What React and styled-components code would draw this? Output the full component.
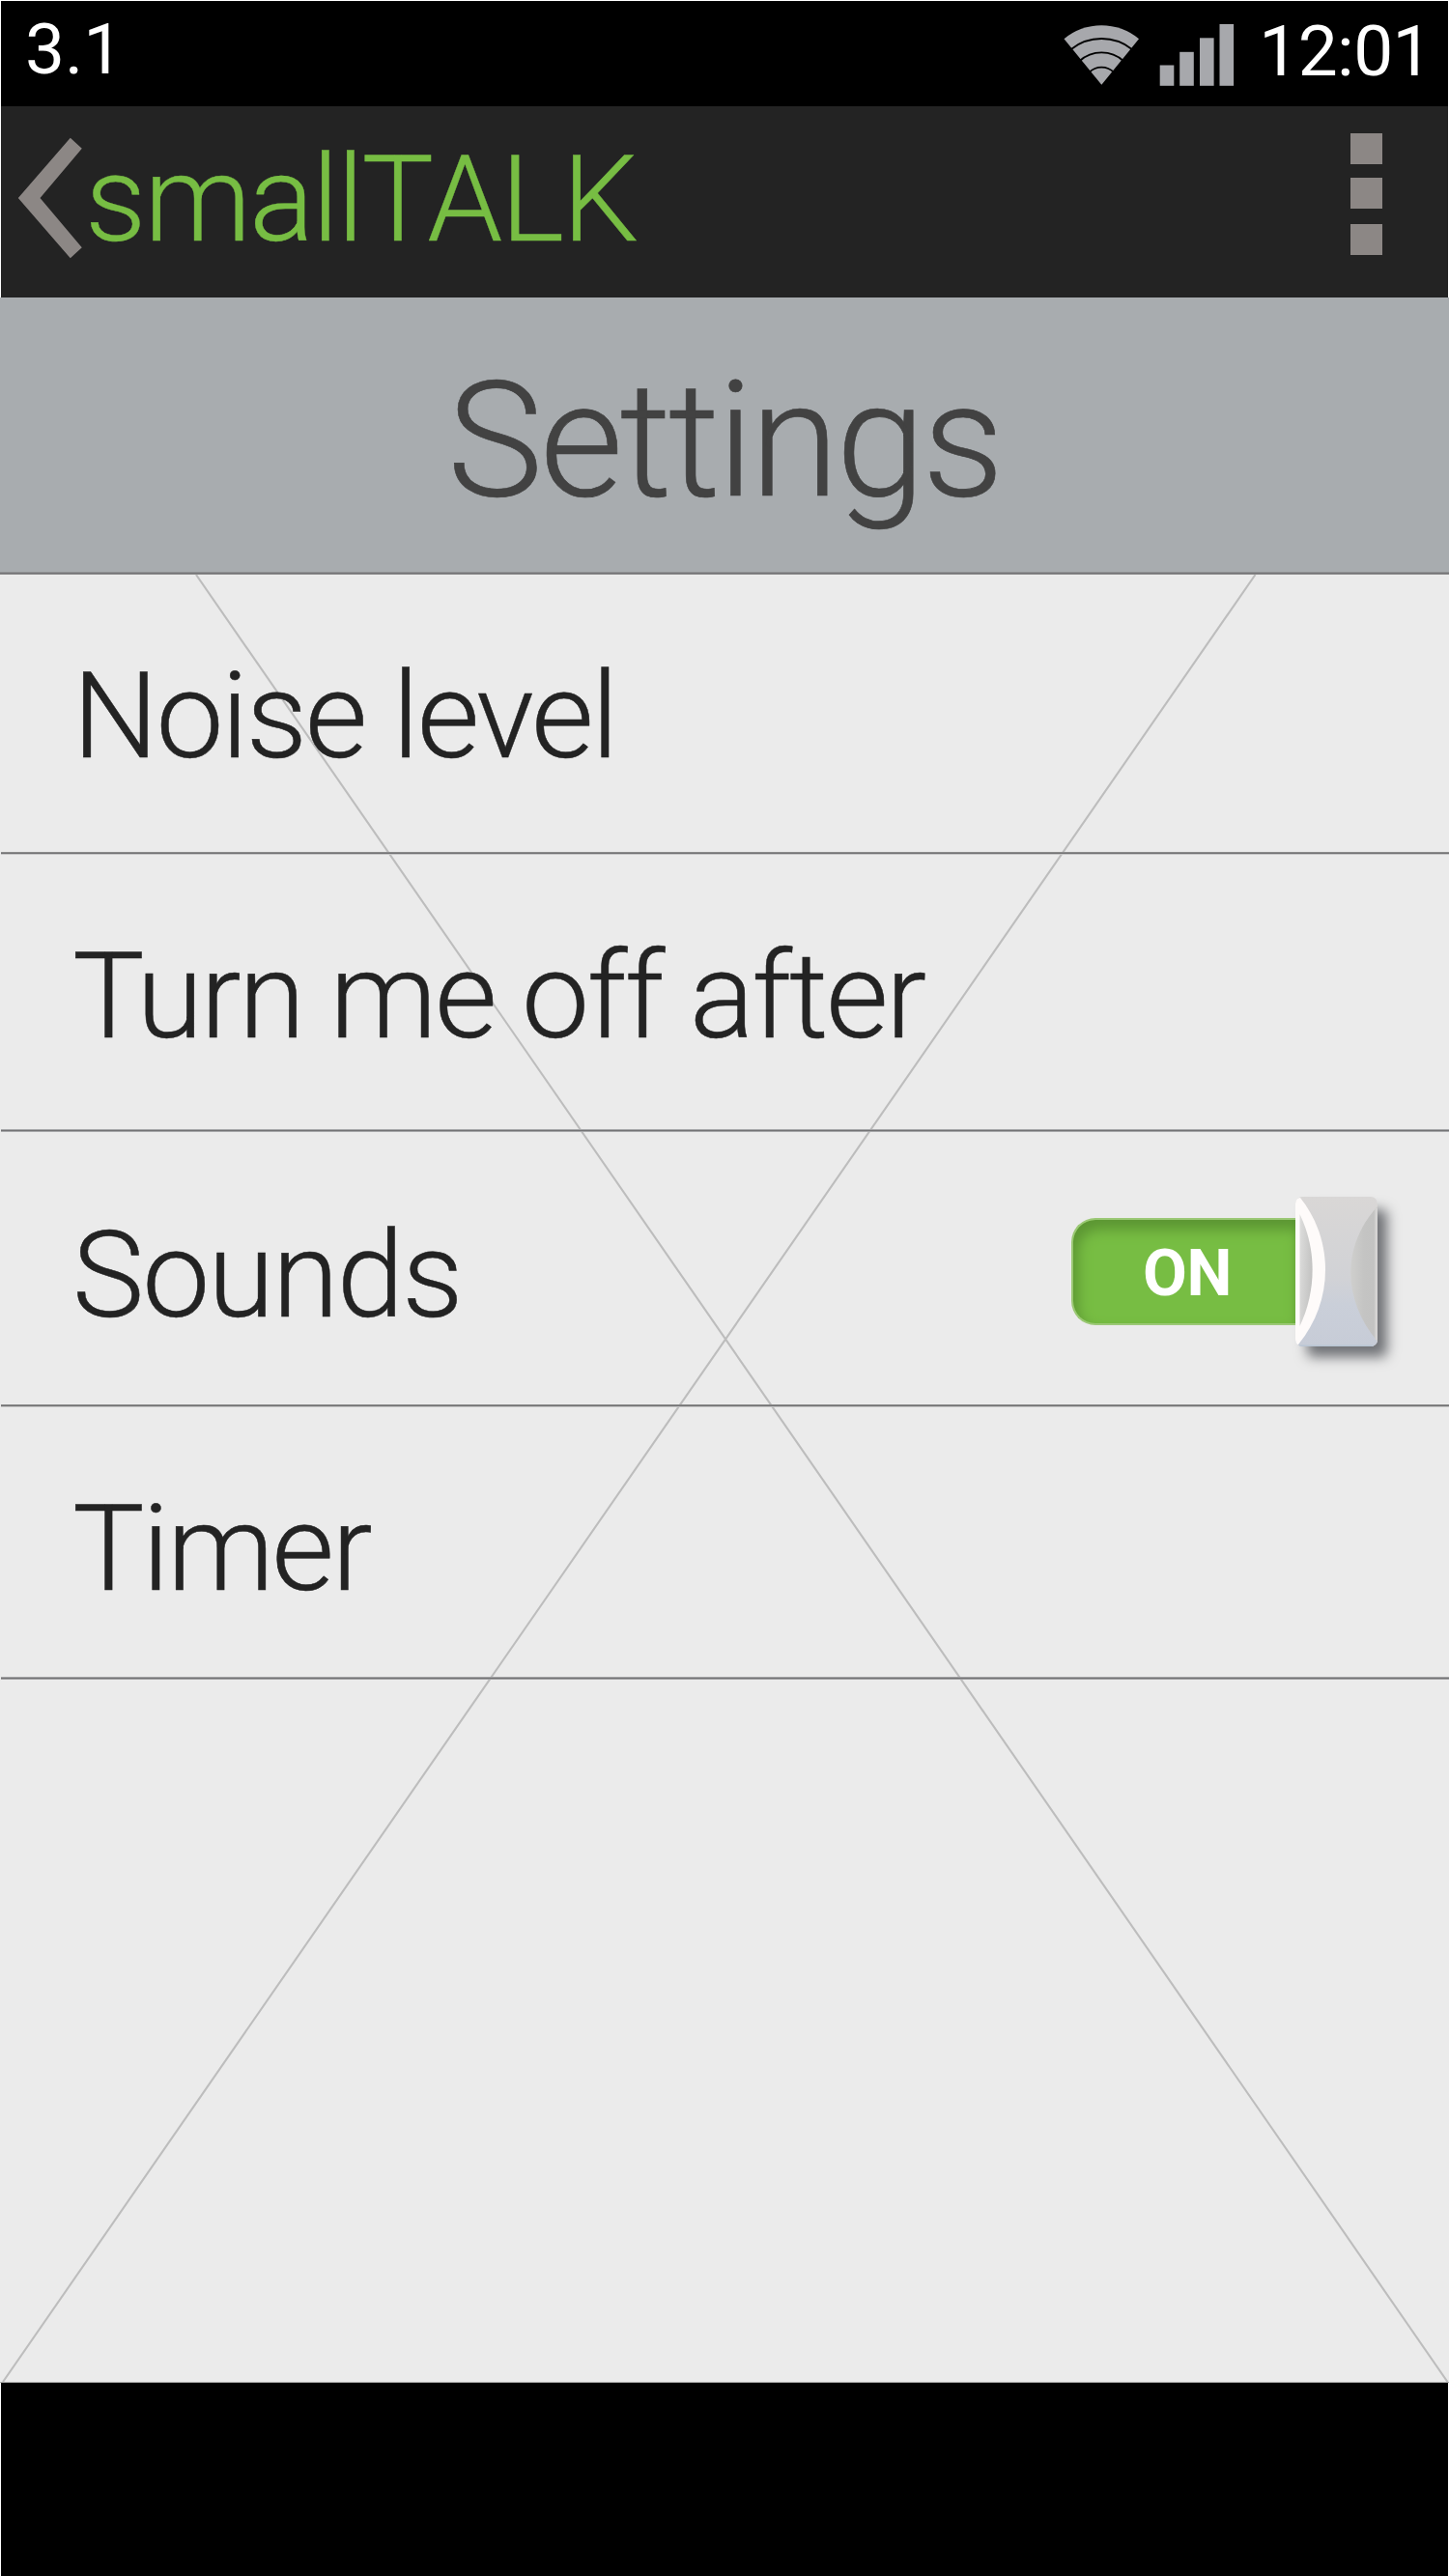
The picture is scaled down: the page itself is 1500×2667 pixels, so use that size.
import React, { useState } from "react";
import styled, { createGlobalStyle } from "styled-components";

const GlobalStyle = createGlobalStyle`
  *, *::before, *::after { box-sizing: border-box; }
  body {
    margin: 0;
    background: #ffffff;
    font-family: Roboto, "Liberation Sans", sans-serif;
  }
`;

const Screen = styled.div`
  display: flex;
  flex-direction: column;
  width: 1500px;
  height: 2667px;
  padding-top: 1px;
  overflow: hidden;
  background: #ffffff;
`;

const StatusBar = styled.header`
  display: flex;
  align-items: flex-start;
  height: 109px;
  margin: 0 1px;
  padding: 7px 17px 0 25px;
  background: #000000;
  color: #ffffff;
`;

const StatusText = styled.span`
  font-size: 73px;
  line-height: 86px;
  white-space: nowrap;
`;

const Clock = styled(StatusText)`
  margin-left: 23px;
  padding-top: 2px;
  letter-spacing: -0.6px;
`;

const StatusIcons = styled.svg`
  width: 180px;
  height: 70px;
  margin: 12px 0 0 auto;
`;

const AppBar = styled.nav`
  display: flex;
  align-items: flex-start;
  justify-content: space-between;
  height: 198px;
  margin: 0 1px;
  background: #232323;
`;

const BackButton = styled.button`
  display: flex;
  align-items: flex-start;
  padding: 0 0 0 17px;
  border: 0;
  background: none;
  color: #77bd43;
  font: inherit;
`;

const BackArrow = styled.svg`
  width: 67px;
  height: 126px;
  margin-top: 32px;
  fill: #8c8785;
`;

const Brand = styled.span`
  padding: 23px 0 0 3px;
  font-size: 125px;
  font-weight: 300;
  line-height: 147px;
  letter-spacing: -2.15px;
  white-space: nowrap;
  -webkit-text-stroke: 0.4px currentColor;
`;

const MenuButton = styled.button`
  display: flex;
  flex-direction: column;
  gap: 14px;
  margin: 28px 68px 0 0;
  padding: 0;
  border: 0;
  background: none;
`;

const MenuDot = styled.span`
  width: 33px;
  height: 32px;
  background: #8c8785;

  &:last-child { margin-top: 2px; }
`;

const TitleBar = styled.div`
  display: flex;
  justify-content: center;
  height: 284px;
  padding: 50px 1px 0 0;
  background: #a8acaf;
`;

const Title = styled.h1`
  margin: 0;
  color: #424242;
  font-size: 167px;
  font-weight: 300;
  line-height: 196px;
  letter-spacing: -3.3px;
  white-space: nowrap;
  -webkit-text-stroke: 0.6px currentColor;
`;

const Divider = styled.div`
  flex: none;
  height: 3px;
  background: linear-gradient(
    ${(p) => p.$top} 0 1px,
    #737375 1px 2px,
    ${(p) => p.$bottom} 2px 3px
  );
`;

const Content = styled.main`
  position: relative;
  display: flex;
  flex: 1;
  flex-direction: column;
  border-bottom: 1px solid #a6a6a6;
  background: #ebebeb;
`;

const CrossLines = styled.svg`
  position: absolute;
  top: 0;
  left: 0;
  width: 1500px;
  height: 1871px;
  stroke: #bdbdbd;
  stroke-width: 2.1;
`;

const List = styled.div`
  position: relative;
  display: flex;
  flex-direction: column;
  padding-left: 1px;
`;

const Row = styled.div`
  display: flex;
  align-items: flex-start;
  justify-content: space-between;
  height: ${(p) => p.$height}px;
  padding: 0 74px;
`;

const RowLabel = styled.span`
  margin-top: ${(p) => p.$top}px;
  color: #232323;
  font-size: 125px;
  font-weight: 300;
  line-height: 147px;
  letter-spacing: ${(p) => p.$tracking}px;
  white-space: nowrap;
  -webkit-text-stroke: 0.5px currentColor;
`;

const Switch = styled.button`
  display: flex;
  align-items: flex-start;
  margin-top: 67px;
  padding: 0;
  border: 0;
  background: none;
`;

const Track = styled.span`
  display: flex;
  align-items: center;
  width: 232px;
  height: 111px;
  margin-top: 22px;
  padding: 2px 0 0 72px;
  border: solid #9bc875;
  border-width: 2px 0 2px 2px;
  border-radius: 25px 0 0 25px;
  background: #77bd43;
  box-shadow: inset 4px 9px 13px 1px #5c9633;
`;

const TrackLabel = styled.span`
  color: #ffffff;
  font: 700 66.5px/78px Roboto, "Liberation Sans", sans-serif;
  letter-spacing: -0.3px;
`;

const Thumb = styled.span`
  width: 85px;
  height: 155px;
  border-radius: 7px;
  box-shadow: 11px 12px 13px -1px #707276;
`;

const ThumbFace = styled.svg`
  display: block;
  width: 85px;
  height: 155px;
`;

const BottomBar = styled.footer`
  height: 200px;
  margin: 0 1px;
  background: #000000;
`;

const rows = [
  { label: "Noise level", height: 287, top: 73, tracking: -2.4, line: ["#8c8c8c", "#c6c6c6"] },
  { label: "Turn me off after", height: 284, top: 73, tracking: -2.46, line: ["#a6a7a9", "#a6a7a9"] },
  { label: "Sounds", height: 282, top: 75, tracking: -1.95, line: ["#8c8c8c", "#c6c6c6"], toggle: true },
  { label: "Timer", height: 279, top: 73, tracking: -2.4, line: ["#a2a2a4", "#a2a2a4"] },
];

function Signals() {
  return (
    <StatusIcons viewBox="1100 20 180 70">
      <g fill="#a7a8ac">
        <path d="M1140.3 87.7 L1101.5 40.3 A60.3 60.3 0 0 1 1179 40.3 Z" />
        <rect x="1200.7" y="67.5" width="14.6" height="21.3" />
        <rect x="1221.2" y="53.8" width="14.6" height="35" />
        <rect x="1242" y="39.3" width="14.6" height="49.5" />
        <rect x="1262.5" y="25" width="14.6" height="63.8" />
      </g>
      <g fill="none" stroke="#000" strokeWidth="1.9">
        <path d="M1108.5 51.2 A51 51 0 0 1 1172.1 51.2" />
        <path d="M1117.5 63.2 A34 34 0 0 1 1163.1 63.2" />
        <path d="M1127.5 75 A18 18 0 0 1 1153.1 75" />
      </g>
    </StatusIcons>
  );
}

function SoundSwitch() {
  const [on, setOn] = useState(true);
  return (
    <Switch role="switch" aria-checked={on} onClick={() => setOn(!on)}>
      <Track>
        <TrackLabel>{on ? "ON" : "OFF"}</TrackLabel>
      </Track>
      <Thumb>
        <ThumbFace viewBox="0 0 85 155">
          <defs>
            <linearGradient id="face" x1="0" y1="0" x2="0" y2="1">
              <stop offset="0" stopColor="#d9d7d6" />
              <stop offset="0.55" stopColor="#d1d2d6" />
              <stop offset="0.72" stopColor="#cacfd9" />
              <stop offset="1" stopColor="#c7ccd7" />
            </linearGradient>
            <linearGradient id="hollow" x1="0" y1="0" x2="1" y2="0.3">
              <stop offset="0" stopColor="#dededd" />
              <stop offset="1" stopColor="#c3c3c2" />
            </linearGradient>
            <linearGradient id="groove" x1="0" y1="0" x2="1" y2="0">
              <stop offset="0" stopColor="#cfcfcd" />
              <stop offset="0.5" stopColor="#c4c4c3" />
              <stop offset="0.85" stopColor="#c3c3c2" />
              <stop offset="1" stopColor="#cfcfcd" />
            </linearGradient>
            <clipPath id="body">
              <rect width="85" height="155" rx="7" />
            </clipPath>
          </defs>
          <g clipPath="url(#body)">
            <rect width="85" height="155" fill="url(#face)" />
            <path d="M0 2 L5 1 C40 45 40 108 3 153 L0 153 Z" fill="#fefbfa" />
            <path d="M4.5 18 C22 54 22 97 4.5 134 Z" fill="url(#hollow)" />
            <path d="M85 10 C48 50 48 106 85 150 Z" fill="url(#groove)" />
            <path d="M84 12 V148" stroke="#d5d4d3" strokeWidth="3" />
            <path d="M4 154.3 H81" stroke="#b9c5d4" strokeWidth="1.4" />
          </g>
        </ThumbFace>
      </Thumb>
    </Switch>
  );
}

export default function App() {
  return (
    <>
      <GlobalStyle />
      <Screen>
        <StatusBar>
          <StatusText>3.1</StatusText>
          <Signals />
          <Clock>12:01</Clock>
        </StatusBar>
        <AppBar>
          <BackButton>
            <BackArrow viewBox="18 142 67 126">
              <path d="M18.8 205 L72.8 142.7 L84.8 153.7 L41.5 205 L84.8 256.3 L72.8 267.3 Z" />
            </BackArrow>
            <Brand>smallTALK</Brand>
          </BackButton>
          <MenuButton aria-label="Menu">
            <MenuDot />
            <MenuDot />
            <MenuDot />
          </MenuButton>
        </AppBar>
        <TitleBar>
          <Title>Settings</Title>
        </TitleBar>
        <Divider $top="#8f9193" $bottom="#929292" />
        <Content>
          <CrossLines viewBox="0 595 1500 1871">
            <path d="M203 595 L1498.5 2466 M1299.5 595 L3 2466" />
          </CrossLines>
          <List>
            {rows.map((row) => (
              <React.Fragment key={row.label}>
                <Row $height={row.height}>
                  <RowLabel $top={row.top} $tracking={row.tracking}>
                    {row.label}
                  </RowLabel>
                  {row.toggle && <SoundSwitch />}
                </Row>
                <Divider $top={row.line[0]} $bottom={row.line[1]} />
              </React.Fragment>
            ))}
          </List>
        </Content>
        <BottomBar />
      </Screen>
    </>
  );
}
